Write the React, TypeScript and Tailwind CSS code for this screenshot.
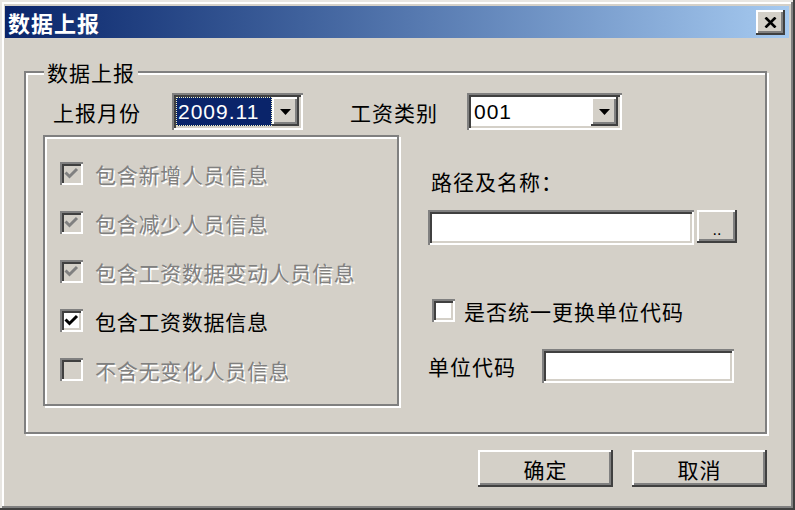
import React from "react";

const RAISED =
  "shadow-[inset_-2px_-2px_#404040,inset_2px_2px_#ffffff,inset_-4px_-4px_#808080,inset_4px_4px_#d4d0c8]";
const SUNKEN =
  "shadow-[inset_2px_2px_#808080,inset_-2px_-2px_#ffffff,inset_4px_4px_#404040,inset_-4px_-4px_#d4d0c8]";

function Arrow() {
  return (
    <svg width="11" height="6" viewBox="0 0 11 6">
      <polygon points="0,0 11,0 5.5,6" fill="#000" />
    </svg>
  );
}

function CheckBox({ checked, disabled }: { checked: boolean; disabled?: boolean }) {
  return (
    <div
      className={
        "w-[23px] h-[23px] shrink-0 flex items-center justify-center " +
        SUNKEN +
        (disabled ? " bg-[#d4d0c8]" : " bg-white")
      }
    >
      {checked && (
        <svg width="23" height="23" viewBox="0 0 23 23">
          <polyline
            points="5.5,10.5 9.5,14.5 17,7"
            fill="none"
            stroke={disabled ? "#808080" : "#000"}
            strokeWidth="3"
          />
        </svg>
      )}
    </div>
  );
}

function CheckRow({ label, checked, disabled }: { label: string; checked: boolean; disabled?: boolean }) {
  return (
    <div className="h-[49px] flex items-center gap-[12px]">
      <CheckBox checked={checked} disabled={disabled} />
      <span
        className={
          "text-[21px] leading-[24px] tracking-[0.7px] " +
          (disabled ? "text-[#808080] [text-shadow:1.5px_1.5px_0_#ffffff]" : "text-black")
        }
      >
        {label}
      </span>
    </div>
  );
}

export default function App() {
  return (
    <div className="w-[795px] h-[510px] bg-[#d4d0c8] flex flex-col pt-[6px] pl-[5px] pr-[6px] overflow-hidden text-black font-['Noto_Sans_CJK_SC',sans-serif] shadow-[inset_-2px_-2px_#404040,inset_2px_2px_#e8e6e2,inset_-4px_-4px_#808080,inset_4px_4px_#ffffff]">
      {/* Title bar */}
      <div className="h-[32px] shrink-0 flex items-center justify-between bg-linear-to-r from-[#0a246a] to-[#a6caf0] pl-[3px] pr-[4px]">
        <span className="text-white font-bold text-[22px] leading-[32px] tracking-[1px]">数据上报</span>
        <div className={"w-[29px] h-[25px] bg-[#d4d0c8] flex items-center justify-center " + RAISED}>
          <svg width="13" height="11" viewBox="0 0 13 11">
            <line x1="1.5" y1="0.5" x2="11.5" y2="10.5" stroke="#000" strokeWidth="2.6" />
            <line x1="11.5" y1="0.5" x2="1.5" y2="10.5" stroke="#000" strokeWidth="2.6" />
          </svg>
        </div>
      </div>

      {/* Group box */}
      <div className="mt-[33px] ml-[19px] w-[743px] h-[363px] shrink-0 border-2 border-[#808080] shadow-[inset_2px_2px_#ffffff,2px_2px_#ffffff] flex flex-col">
        <div className="-mt-[13px] ml-[18px] px-[3px] bg-[#d4d0c8] self-start text-[21px] leading-[24px] tracking-[1px]">
          数据上报
        </div>

        {/* Row 1 */}
        <div className="mt-[9px] h-[37px] flex items-center pl-[27px]">
          <span className="w-[119px] text-[21px] leading-[24px] tracking-[1px]">上报月份</span>
          <div className={"w-[131px] h-[37px] p-[4px] flex bg-white " + SUNKEN}>
            <div className="flex-1 flex items-center bg-[#0a246a] border border-dotted border-[#f0f0c0] pl-[1px] text-white font-['Liberation_Sans',sans-serif] text-[21px] leading-[24px] tracking-[1px]">
              2009.11
            </div>
            <div className={"w-[27px] bg-[#d4d0c8] flex items-center justify-center " + RAISED}>
              <Arrow />
            </div>
          </div>
          <span className="ml-[47px] w-[117px] text-[21px] leading-[24px] tracking-[1px]">工资类别</span>
          <div className={"w-[155px] h-[37px] p-[4px] flex bg-white " + SUNKEN}>
            <div className="flex-1 flex items-center pl-[3px] font-['Liberation_Sans',sans-serif] text-[21px] leading-[24px] tracking-[1px]">
              001
            </div>
            <div className={"w-[27px] bg-[#d4d0c8] flex items-center justify-center " + RAISED}>
              <Arrow />
            </div>
          </div>
        </div>

        {/* Row 2 */}
        <div className="mt-[5px] ml-[17px] flex">
          <div className="w-[356px] h-[271px] border-2 border-[#808080] shadow-[inset_2px_2px_#ffffff,2px_2px_#ffffff] flex flex-col pt-[12px] pl-[15px]">
            <CheckRow label="包含新增人员信息" checked disabled />
            <CheckRow label="包含减少人员信息" checked disabled />
            <CheckRow label="包含工资数据变动人员信息" checked disabled />
            <CheckRow label="包含工资数据信息" checked />
            <CheckRow label="不含无变化人员信息" checked={false} disabled />
          </div>

          <div className="ml-[29px] flex flex-col pt-[34px]">
            <span className="ml-[3px] text-[21px] leading-[24px] tracking-[1px]">路径及名称：</span>
            <div className="mt-[17px] flex items-start">
              <div className={"w-[266px] h-[35px] bg-white " + SUNKEN} />
              <div
                className={
                  "ml-[3px] w-[40px] h-[33px] bg-[#d4d0c8] flex items-center justify-center font-['Liberation_Sans',sans-serif] text-[16px] leading-[16px] pt-[6px] " +
                  RAISED
                }
              >
                ..
              </div>
            </div>
            <div className="mt-[53px] h-[25px] flex items-center gap-[9px] ml-[4px]">
              <CheckBox checked={false} />
              <span className="text-[21px] leading-[24px] tracking-[1px]">是否统一更换单位代码</span>
            </div>
            <div className="mt-[26px] flex items-center">
              <span className="w-[114px] text-[21px] leading-[24px] tracking-[1px]">单位代码</span>
              <div className={"w-[192px] h-[34px] bg-white " + SUNKEN} />
            </div>
          </div>
        </div>
      </div>

      {/* Buttons */}
      <div className="mt-[16px] ml-[19px] w-[743px] flex justify-end gap-[19px]">
        <div className={"w-[135px] h-[37px] flex items-center justify-center text-[21px] leading-[24px] tracking-[1px] " + RAISED}>
          确定
        </div>
        <div className={"w-[135px] h-[37px] flex items-center justify-center text-[21px] leading-[24px] tracking-[1px] " + RAISED}>
          取消
        </div>
      </div>
    </div>
  );
}
